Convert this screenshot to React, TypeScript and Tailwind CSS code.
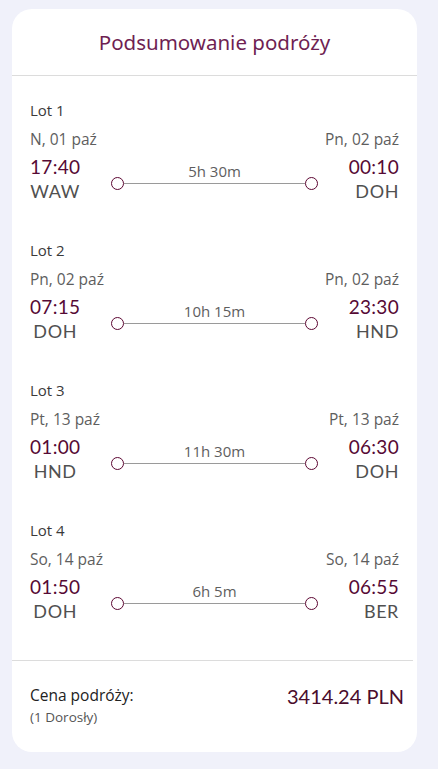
type Flight = {
  label: string;
  fromDate: string;
  toDate: string;
  depart: string;
  arrive: string;
  from: string;
  to: string;
  duration: string;
};

const flights: Flight[] = [
  { label: "Lot 1", fromDate: "N, 01 paź", toDate: "Pn, 02 paź", depart: "17:40", arrive: "00:10", from: "WAW", to: "DOH", duration: "5h 30m" },
  { label: "Lot 2", fromDate: "Pn, 02 paź", toDate: "Pn, 02 paź", depart: "07:15", arrive: "23:30", from: "DOH", to: "HND", duration: "10h 15m" },
  { label: "Lot 3", fromDate: "Pt, 13 paź", toDate: "Pt, 13 paź", depart: "01:00", arrive: "06:30", from: "HND", to: "DOH", duration: "11h 30m" },
  { label: "Lot 4", fromDate: "So, 14 paź", toDate: "So, 14 paź", depart: "01:50", arrive: "06:55", from: "DOH", to: "BER", duration: "6h 5m" },
];

const body = "font-['Open_Sans',sans-serif]";
const display = "font-['Noto_Sans',sans-serif]";
const digits = "font-['Lato',sans-serif]";

const Dot = () => (
  <div className="h-[13px] w-[13px] shrink-0 rounded-full border-[1.5px] border-[#5c0632] bg-white" />
);

const FlightRow = ({ flight }: { flight: Flight }) => {
  return (
    <div className="pb-[37px]">
      <div className={`${body} text-[15px] leading-5 text-[#3a3a3a]`}>{flight.label}</div>
      <div className={`${body} mt-[9px] flex justify-between text-[15.5px] leading-5 text-[#5e5e5e]`}>
        <span>{flight.fromDate}</span>
        <span>{flight.toDate}</span>
      </div>
      <div className="mt-[6px] flex justify-between">
        {/* wylot */}
        <div className={`${digits} flex flex-col items-center`}>
          <span className="text-[19px] leading-6 tracking-[0.3px] text-[#560a35]">{flight.depart}</span>
          <span className="text-[18px] leading-6 tracking-[0.6px] text-[#505050]">{flight.from}</span>
        </div>

        {/* czas lotu + oś */}
        <div className="flex w-[207px] flex-col pt-[6px]">
          <div className={`${body} text-center text-[15px] leading-5 text-[#5e5e5e]`}>
            {flight.duration}
          </div>
          <div className="-mt-[4px] flex items-center">
            <Dot />
            <div className="h-px flex-1 bg-[#9a9a9a]" />
            <Dot />
          </div>
        </div>

        {/* przylot */}
        <div className={`${digits} flex flex-col items-end`}>
          <span className="text-[19px] leading-6 tracking-[0.3px] text-[#560a35]">{flight.arrive}</span>
          <span className="text-[18px] leading-6 tracking-[0.6px] text-[#505050]">{flight.to}</span>
        </div>
      </div>
    </div>
  );
};

export default function App() {
  return (
    <div className="min-h-[769px] bg-[#f0f1fa] pl-[12px] pr-[21px] pt-[9px]">
      <div className="rounded-[20px] bg-white">
        <div className="flex h-[67px] items-center justify-center border-b border-[#dcdcdc]">
          <h1 className={`${display} text-[20.5px] text-[#6f1f53]`}>Podsumowanie podróży</h1>
        </div>

        <div className="px-[18px] pt-[24px]">
          {flights.map((f) => (
            <FlightRow key={f.label} flight={f} />
          ))}
        </div>

        <div className="mr-[4px] border-t border-[#dcdcdc]" />
        <div className="flex items-start justify-between pb-[24px] pl-[18px] pr-[13px] pt-[23px]">
          <div className={body}>
            <div className="text-[15.5px] leading-[22px] text-[#222]">Cena podróży:</div>
            <div className="text-[13.5px] leading-[22px] text-[#555]">(1 Dorosły)</div>
          </div>
          <div className={`${digits} text-[20px] leading-6 text-[#4a0d2c]`}>3414.24 PLN</div>
        </div>
      </div>
    </div>
  );
}
